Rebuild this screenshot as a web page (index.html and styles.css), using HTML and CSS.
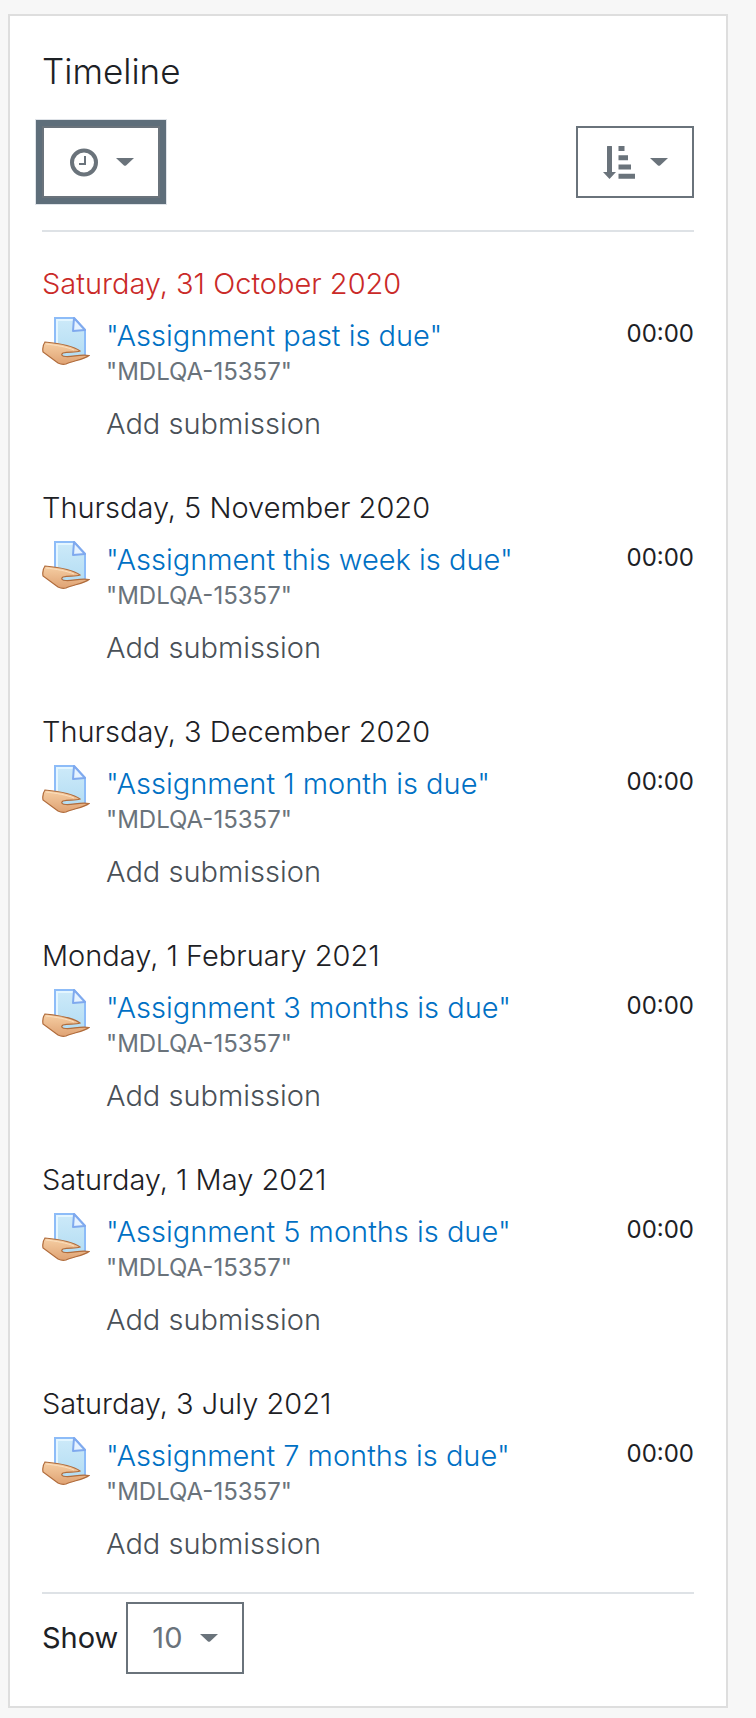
FILE: index.html
```html
<!DOCTYPE html>
<html lang="en">
<head>
<meta charset="utf-8">
<meta name="viewport" content="width=device-width, initial-scale=1">
<title>Timeline</title>
<link rel="stylesheet" href="styles.css">
</head>
<body>
<svg class="defs" aria-hidden="true">
  <defs>
    <linearGradient id="paper" x1="0" y1="0" x2="0" y2="1">
      <stop offset="0" stop-color="#cdeaf9"/>
      <stop offset="1" stop-color="#b4ddf3"/>
    </linearGradient>
    <linearGradient id="skin" x1="0" y1="0" x2="0" y2="1">
      <stop offset="0" stop-color="#f6cfa4"/>
      <stop offset="1" stop-color="#dfa273"/>
    </linearGradient>
    <symbol id="assign" viewBox="0 0 48 49">
      <path d="M13 2H32L43 14V41H13Z" fill="url(#paper)" stroke="#8dbcf8" stroke-width="2"/>
      <path d="M15 40V4H31" fill="none" stroke="#e4f6ff" stroke-width="2"/>
      <path d="M32 2L43 14L31 15Z" fill="#e6f3ff" stroke="#7fa9ee" stroke-width="2" stroke-linejoin="round"/>
      <path d="M3 26C14 27 30 29 38 35C33 37 27 35.500 21 37C18.500 38.500 20 40.500 24 40.500C31 41 38 38 47 39.500C43 43 31 45 24 48Q20 49 16 47L1 36Q0 30 3 26Z" fill="url(#skin)" stroke="#b06c3c" stroke-width="1.200"/>
      <path d="M4 28C14 29 25 31 32 34" fill="none" stroke="#fbdfbe" stroke-width="1"/>
    </symbol>
    <symbol id="caret" viewBox="0 0 18 8"><path d="M0 0H18L10 7.500Q9 8 8 7.500Z" fill="currentColor"/></symbol>
  </defs>
</svg>
<section class="card" aria-labelledby="timeline-title">
  <h1 class="title" id="timeline-title">Timeline</h1>
  <div class="toolbar">
    <button class="toggle toggle-focus" type="button" aria-label="Filter timeline by date" aria-haspopup="true">
      <svg class="icon" viewBox="0 0 36 36" aria-hidden="true" fill="none" stroke="currentColor"><circle cx="16" cy="18.500" r="12" stroke-width="4"/><path d="M17 12V20H11" stroke-width="2"/></svg>
      <svg class="caret" aria-hidden="true"><use href="#caret"/></svg>
    </button>
    <button class="toggle" type="button" aria-label="Sort timeline items" aria-haspopup="true">
      <svg class="icon" viewBox="0 0 36 36" aria-hidden="true" fill="currentColor"><path d="M5 2.500Q5 2 5.500 2H9.500Q10 2 10 2.500V28H14L7.500 35L1 28H5ZM16.500 2H22.500V7H16.500ZM16.500 11.300H26V16.300H16.500ZM16.500 20.500H29V25.500H16.500ZM16.500 29.700H33V34.700H16.500Z"/></svg>
      <svg class="caret" aria-hidden="true"><use href="#caret"/></svg>
    </button>
  </div>
  <div class="events">
    <section class="day">
      <h2 class="date overdue">Saturday, 31 October 2020</h2>
      <div class="event">
        <svg class="activity" aria-hidden="true"><use href="#assign"/></svg>
        <div class="details"><a class="name" href="#">"Assignment past is due"</a><span class="course">"MDLQA-15357"</span><a class="action" href="#">Add submission</a></div>
        <time class="time">00:00</time>
      </div>
    </section>
    <section class="day">
      <h2 class="date">Thursday, 5 November 2020</h2>
      <div class="event">
        <svg class="activity" aria-hidden="true"><use href="#assign"/></svg>
        <div class="details"><a class="name" href="#">"Assignment this week is due"</a><span class="course">"MDLQA-15357"</span><a class="action" href="#">Add submission</a></div>
        <time class="time">00:00</time>
      </div>
    </section>
    <section class="day">
      <h2 class="date">Thursday, 3 December 2020</h2>
      <div class="event">
        <svg class="activity" aria-hidden="true"><use href="#assign"/></svg>
        <div class="details"><a class="name" href="#">"Assignment 1 month is due"</a><span class="course">"MDLQA-15357"</span><a class="action" href="#">Add submission</a></div>
        <time class="time">00:00</time>
      </div>
    </section>
    <section class="day">
      <h2 class="date">Monday, 1 February 2021</h2>
      <div class="event">
        <svg class="activity" aria-hidden="true"><use href="#assign"/></svg>
        <div class="details"><a class="name" href="#">"Assignment 3 months is due"</a><span class="course">"MDLQA-15357"</span><a class="action" href="#">Add submission</a></div>
        <time class="time">00:00</time>
      </div>
    </section>
    <section class="day">
      <h2 class="date">Saturday, 1 May 2021</h2>
      <div class="event">
        <svg class="activity" aria-hidden="true"><use href="#assign"/></svg>
        <div class="details"><a class="name" href="#">"Assignment 5 months is due"</a><span class="course">"MDLQA-15357"</span><a class="action" href="#">Add submission</a></div>
        <time class="time">00:00</time>
      </div>
    </section>
    <section class="day">
      <h2 class="date">Saturday, 3 July 2021</h2>
      <div class="event">
        <svg class="activity" aria-hidden="true"><use href="#assign"/></svg>
        <div class="details"><a class="name" href="#">"Assignment 7 months is due"</a><span class="course">"MDLQA-15357"</span><a class="action" href="#">Add submission</a></div>
        <time class="time">00:00</time>
      </div>
    </section>
  </div>
  <div class="paging">
    <label for="limit">Show</label>
    <div class="picker">
      <select class="limit" id="limit"><option>5</option><option selected>10</option><option>25</option></select>
      <svg class="caret" aria-hidden="true"><use href="#caret"/></svg>
    </div>
  </div>
</section>
</body>
</html>
```
FILE: styles.css
```css
* { box-sizing: border-box; }

body {
  margin: 0;
  padding: 14px 28px 10px 8px;
  background: #f7f7f7;
  color: #1d2125;
  font: 300 29px/44px Inter, "Liberation Sans", sans-serif;
}

.defs { position: absolute; width: 0; height: 0; }

.card {
  padding: 32px;
  border: 2px solid #dedede;
  background: #fff;
}

.title {
  margin: 0 0 32px;
  font-size: 35px;
  font-weight: 300;
  line-height: 46px;
}

.toolbar { display: flex; justify-content: space-between; }

.toggle {
  display: flex;
  align-items: center;
  gap: 12px;
  padding: 16px 24px;
  border: 2px solid #6a737b;
  background: #fff;
  color: #6a737b;
}

.toggle-focus { box-shadow: 0 0 0 6px #5e6e7a, 0 0 0 7px #dfe3e8; }

.icon { width: 36px; height: 36px; }
.caret { width: 18px; height: 8px; }

.events {
  display: grid;
  gap: 40px;
  margin-top: 32px;
  padding: 30px 0 26px;
  border: solid #dee2e6;
  border-width: 2px 0;
}

.date {
  margin: 0 0 10px;
  font-size: 29px;
  font-weight: 300;
}

.overdue { color: #ca2a28; }

.event { display: flex; align-items: flex-start; gap: 16px; }
.activity { flex: none; width: 48px; height: 49px; }
.details { display: grid; flex: 1; justify-items: start; padding-top: 2px; }
.details a { text-decoration: none; }
.details .name { color: #0070c4; line-height: 36px; }
.course { color: #6a737b; font-size: 24px; font-weight: 400; line-height: 36px; }
.details .action { margin-top: 12px; color: #495057; }
.time { font-size: 24px; font-weight: 400; line-height: 36px; }

.paging {
  display: flex;
  align-items: center;
  gap: 8px;
  margin-top: 8px;
  font-weight: 400;
}

.picker { display: grid; align-items: center; color: #6a737b; }
.picker > * { grid-area: 1 / 1; }
.picker .caret { justify-self: end; margin-right: 26px; pointer-events: none; }

.limit {
  appearance: none;
  width: 118px;
  height: 72px;
  padding: 0 24px;
  border: 2px solid #6a737b;
  border-radius: 0;
  background: #fff;
  color: inherit;
  font: inherit;
}
```
